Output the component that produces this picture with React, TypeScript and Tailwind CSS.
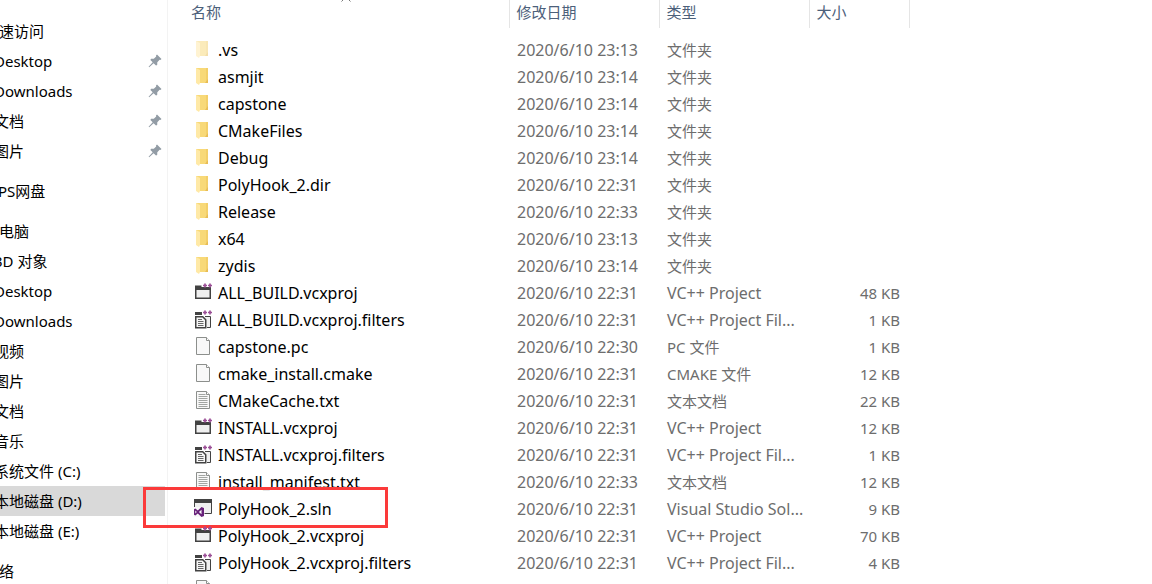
import React from "react";

type IconKind = "hidden" | "folder" | "project" | "filters" | "file" | "text" | "solution";

interface FileRow {
  name: string;
  icon: IconKind;
  date: string;
  type: string;
  size?: string;
  marked?: boolean;
}

interface NavItem {
  label: string;
  child?: boolean;
  pinned?: boolean;
  selected?: boolean;
}

const files: FileRow[] = [
  { name: ".vs", icon: "hidden", date: "2020/6/10 23:13", type: "文件夹" },
  { name: "asmjit", icon: "folder", date: "2020/6/10 23:14", type: "文件夹" },
  { name: "capstone", icon: "folder", date: "2020/6/10 23:14", type: "文件夹" },
  { name: "CMakeFiles", icon: "folder", date: "2020/6/10 23:14", type: "文件夹" },
  { name: "Debug", icon: "folder", date: "2020/6/10 23:14", type: "文件夹" },
  { name: "PolyHook_2.dir", icon: "folder", date: "2020/6/10 22:31", type: "文件夹" },
  { name: "Release", icon: "folder", date: "2020/6/10 22:33", type: "文件夹" },
  { name: "x64", icon: "folder", date: "2020/6/10 23:13", type: "文件夹" },
  { name: "zydis", icon: "folder", date: "2020/6/10 23:14", type: "文件夹" },
  { name: "ALL_BUILD.vcxproj", icon: "project", date: "2020/6/10 22:31", type: "VC++ Project", size: "48 KB" },
  { name: "ALL_BUILD.vcxproj.filters", icon: "filters", date: "2020/6/10 22:31", type: "VC++ Project Fil...", size: "1 KB" },
  { name: "capstone.pc", icon: "file", date: "2020/6/10 22:30", type: "PC 文件", size: "1 KB" },
  { name: "cmake_install.cmake", icon: "file", date: "2020/6/10 22:31", type: "CMAKE 文件", size: "12 KB" },
  { name: "CMakeCache.txt", icon: "text", date: "2020/6/10 22:31", type: "文本文档", size: "22 KB" },
  { name: "INSTALL.vcxproj", icon: "project", date: "2020/6/10 22:31", type: "VC++ Project", size: "12 KB" },
  { name: "INSTALL.vcxproj.filters", icon: "filters", date: "2020/6/10 22:31", type: "VC++ Project Fil...", size: "1 KB" },
  { name: "install_manifest.txt", icon: "text", date: "2020/6/10 22:33", type: "文本文档", size: "12 KB" },
  { name: "PolyHook_2.sln", icon: "solution", date: "2020/6/10 22:31", type: "Visual Studio Sol...", size: "9 KB", marked: true },
  { name: "PolyHook_2.vcxproj", icon: "project", date: "2020/6/10 22:31", type: "VC++ Project", size: "70 KB" },
  { name: "PolyHook_2.vcxproj.filters", icon: "filters", date: "2020/6/10 22:31", type: "VC++ Project Fil...", size: "4 KB" },
  { name: "", icon: "file", date: "", type: "" },
];

const navGroups: NavItem[][] = [
  [
    { label: "快速访问" },
    { label: "Desktop", child: true, pinned: true },
    { label: "Downloads", child: true, pinned: true },
    { label: "文档", child: true, pinned: true },
    { label: "图片", child: true, pinned: true },
  ],
  [{ label: "WPS网盘" }],
  [
    { label: "此电脑" },
    { label: "3D 对象", child: true },
    { label: "Desktop", child: true },
    { label: "Downloads", child: true },
    { label: "视频", child: true },
    { label: "图片", child: true },
    { label: "文档", child: true },
    { label: "音乐", child: true },
    { label: "系统文件 (C:)", child: true },
    { label: "本地磁盘 (D:)", child: true, selected: true },
    { label: "本地磁盘 (E:)", child: true },
  ],
  [{ label: "网络" }],
];

const PinIcon = () => (
  <svg width="14" height="14" viewBox="0 0 14 14" fill="#929ca5">
    <path d="M9 0.5 13.5 5 12.4 6 11.6 5.8 9.3 8.2 9.2 11 8 11.6 5.6 9.2 1.2 13.2 0.6 12.7 4.7 8.3 2.4 6 3 4.8 5.8 4.7 8.2 2.4 8 1.5Z" />
  </svg>
);

const PlusPlus = () => (
  <path d="M9 2.5h4M11 .5v4M14 2.5h4M16 .5v4" stroke="#9b4f96" strokeWidth="1.7" fill="none" />
);

const FileIcon: React.FC<{ kind: IconKind }> = ({ kind }) => (
  <svg width="20" height="20" viewBox="0 0 20 20" className="shrink-0">
    {(kind === "folder" || kind === "hidden") && (
      <g opacity={kind === "hidden" ? 0.5 : 1}>
        <path d="M2 1h12v15H2z" fill="#f8d978" />
        <path d="M12 1h2v15h-2z" fill="#f3cf69" />
        <path d="M11 16l3-4v4z" fill="#e8bd55" />
        <path d="M2 1l4 2v13l-1 2-3-2z" fill="#ffe9a6" />
      </g>
    )}
    {kind === "project" && (
      <>
        <path d="M1.75 4.750h14.500v10.500H1.750z" fill="#f0f0f0" stroke="#424242" strokeWidth="1.5" />
        <path d="M1 2.500h6.500V5H17v2H1z" fill="#424242" />
        <PlusPlus />
      </>
    )}
    {kind === "filters" && (
      <>
        <path d="M1 2h7v3H1z" fill="#424242" />
        <path d="M11 6.500h5.500v11H13" fill="#f0f0f0" stroke="#424242" />
        <path d="M1.750 6.750h7l3 3v8h-10z" fill="#f6f6f6" stroke="#424242" strokeWidth="1.5" />
        <path d="M4 9.500h4M4 11.500h5.500M4 13.500h5.500M4 15.500h5.500" stroke="#424242" strokeWidth=".8" />
        <PlusPlus />
      </>
    )}
    {(kind === "file" || kind === "text") && (
      <>
        <path d="M2.5.5h10l3 3v14h-13z" fill="#f8f8f8" stroke="#8c8f8c" />
        <path d="M12.5.5v3h3" fill="#fff" stroke="#8c8f8c" />
      </>
    )}
    {kind === "text" && (
      <path d="M4.5 3.5h7M4.5 5.5h9M4.5 7.5h9M4.5 9.5h9M4.5 11.5h9M4.5 13.5h9M4.5 15.5h9" stroke="#a2a5a2" />
    )}
    {kind === "solution" && (
      <>
        <path d="M.5.5h17v14H.5z" fill="#f0f0f0" stroke="#424242" />
        <path d="M0 0h18v4H0z" fill="#424242" />
        <path d="M0 8h10.500v10H0z" fill="#f8f8f8" />
        <path d="M7.500 8l2.500 1v8l-2.500 1-3.700-3.500L1.300 16.500 0 15.700v-5.400l1.300-.8 2.500 2z" fill="#68217a" />
        <path d="M1.300 11.500v3L2.800 13zM7.500 10.700v4.600L4.900 13z" fill="#f8f8f8" />
      </>
    )}
  </svg>
);

const Sidebar = () => (
  <nav className="w-[168px] shrink-0 overflow-hidden border-r border-[#f3f3f3] pt-4 pr-0.5 text-[15px] text-black">
    <div className="-ml-4 flex flex-col gap-2.5">
      {navGroups.map((group, index) => (
        <ul key={index}>
          {group.map((item) => (
            <li key={item.label}>
              <a
                href="#"
                className={`flex h-[30px] items-center justify-between pr-[3px] whitespace-nowrap ${
                  item.child ? "pl-2.5" : ""
                } ${item.selected ? "bg-[#d9d9d9]" : ""}`}
              >
                {item.label}
                {item.pinned && <PinIcon />}
              </a>
            </li>
          ))}
        </ul>
      ))}
    </div>
  </nav>
);

// Types written in Latin letters only use the same size as the file names
const isLatin = (text: string) => /^[\x20-\x7e]*$/.test(text);

const FileTable = () => (
  <table className="w-[741px] table-fixed border-collapse text-left whitespace-nowrap">
    <colgroup>
      <col className="w-[341px]" />
      <col className="w-[150px]" />
      <col className="w-[150px]" />
      <col className="w-[100px]" />
    </colgroup>
    <thead className="text-[15px] text-[#4c607a]">
      <tr className="h-7">
        <th className="relative border-r border-[#e5e5e5] p-0 pb-1 pl-[23px] font-normal">
          名称
          <svg width="10" height="6" viewBox="0 0 10 6" className="absolute -top-1 left-[173px]">
            <path d="M.5 5.500 5 1l4.500 4.500" fill="none" stroke="#777" />
          </svg>
        </th>
        <th className="border-r border-[#e5e5e5] p-0 pb-1 pl-[7px] font-normal">修改日期</th>
        <th className="border-r border-[#e5e5e5] p-0 pb-1 pl-[7px] font-normal">类型</th>
        <th className="border-r border-[#e5e5e5] p-0 pb-1 pl-[7px] font-normal">大小</th>
      </tr>
    </thead>
    <tbody className="text-[15px] text-[#6d6d6d]">
      <tr className="h-2" aria-hidden="true" />
      {files.map((file, index) => (
        <tr key={index} className="h-[27px]">
          <td className="relative p-0 pl-[26px] text-base leading-5 text-black">
            <div className="flex items-center gap-1">
              <FileIcon kind={file.icon} />
              <span>{file.name}</span>
            </div>
            {file.marked && (
              <div className="absolute -top-2 -left-[25px] h-[41px] w-[245px] border-3 border-[#fb3a3a]" />
            )}
          </td>
          <td className="p-0 pl-2 text-base leading-5">{file.date}</td>
          <td className={`p-0 pl-2 leading-5 ${isLatin(file.type) ? "text-base leading-5" : ""}`}>{file.type}</td>
          <td className="p-0 pr-[9px] text-right">{file.size}</td>
        </tr>
      ))}
    </tbody>
  </table>
);

export default function App() {
  return (
    <div className="flex h-screen overflow-hidden bg-white font-['Noto_Sans','Noto_Sans_CJK_SC',sans-serif] leading-5">
      <Sidebar />
      <main className="min-w-0 flex-1">
        <FileTable />
      </main>
    </div>
  );
}
